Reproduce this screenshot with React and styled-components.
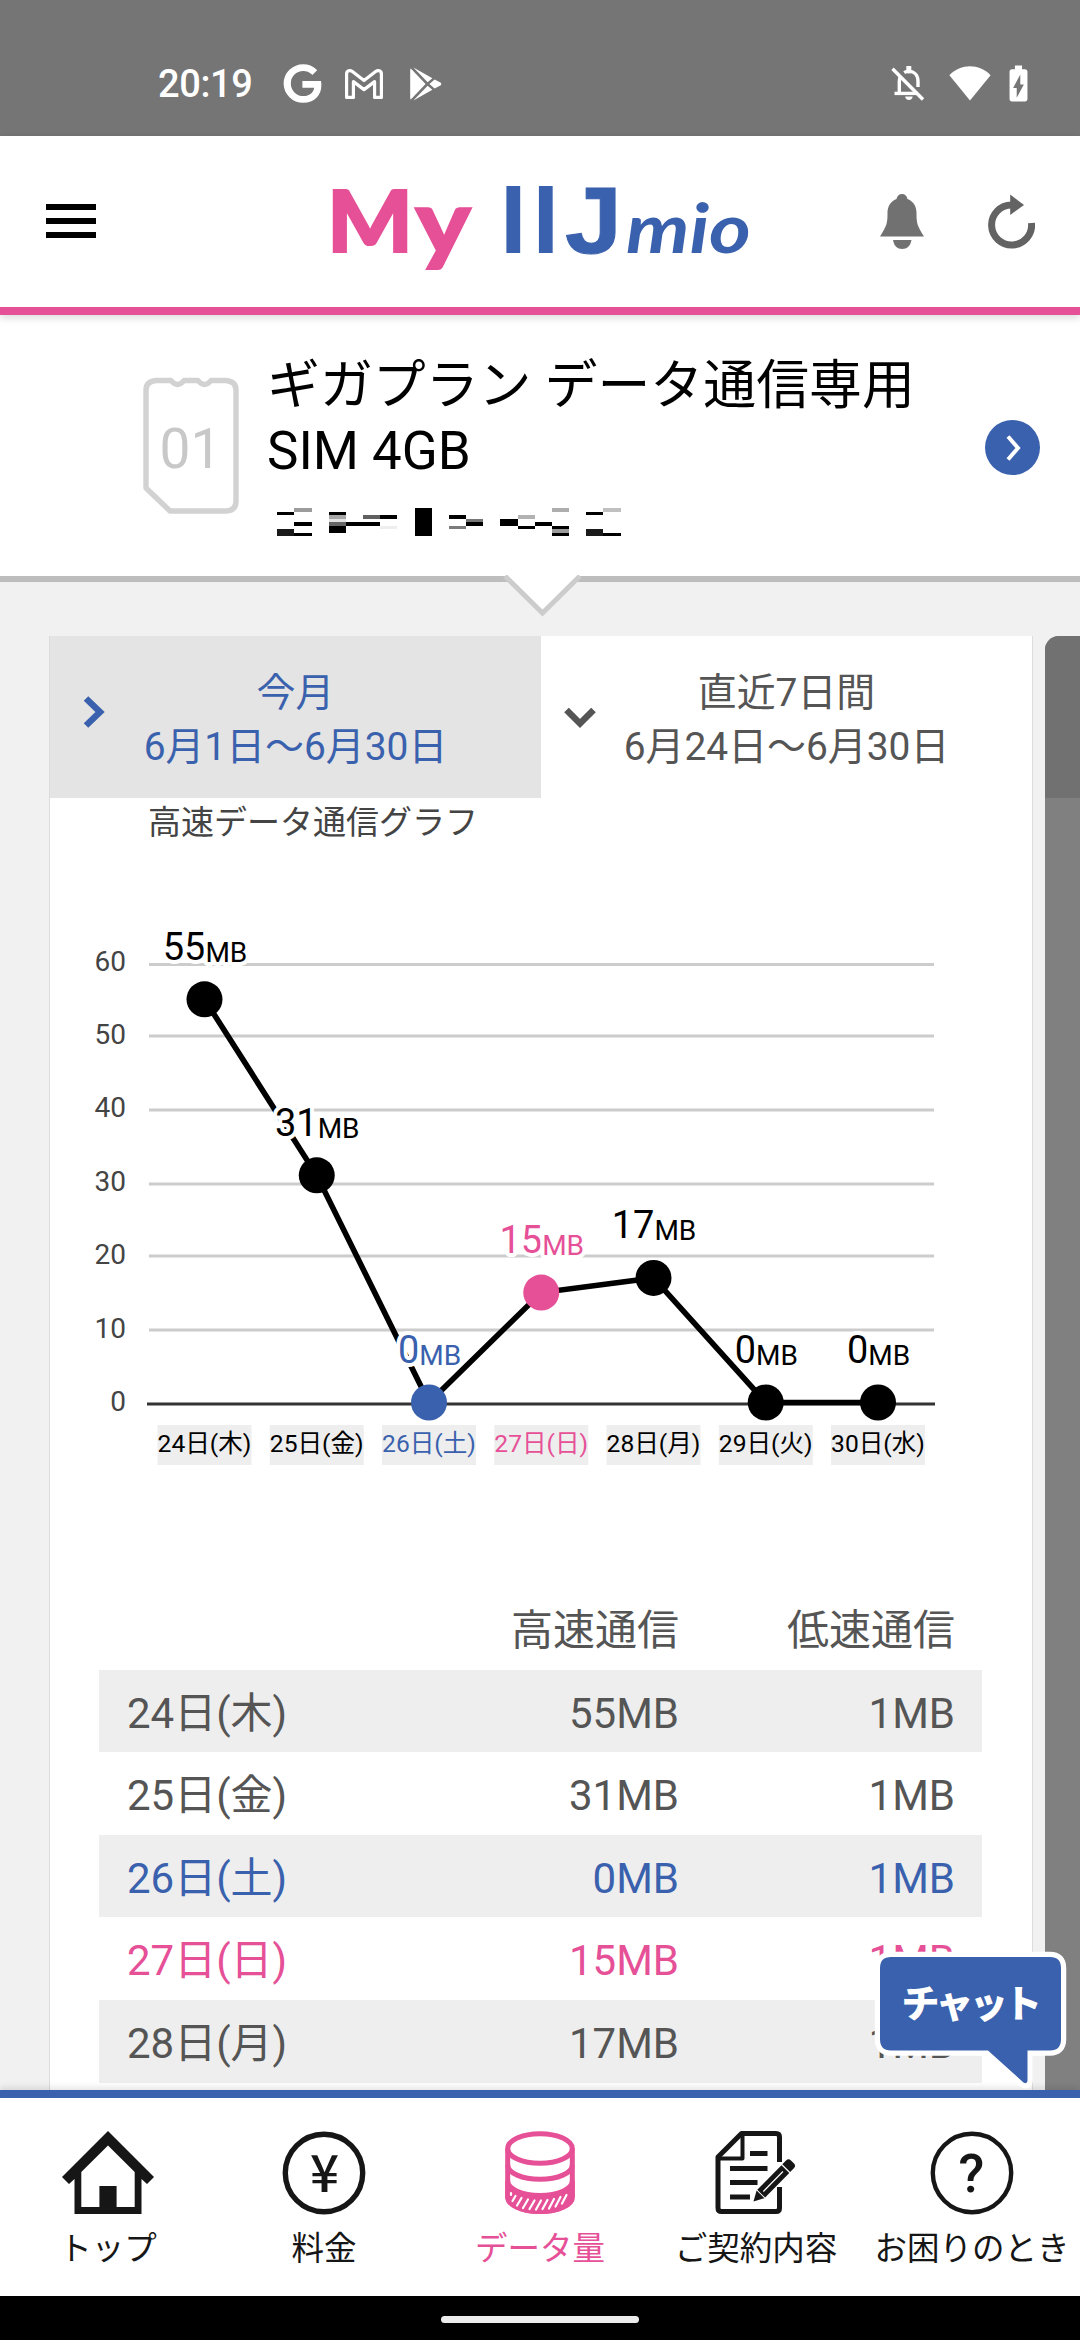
import React from "react";
import styled, { createGlobalStyle } from "styled-components";
import { SiGoogle } from "react-icons/si";
import { MdBatteryChargingFull } from "react-icons/md";

const PINK = "#e65097";
const BLUE = "#3a61ad";
const INK = "#161616";

const Global = createGlobalStyle`
  * { box-sizing: border-box; }
  body {
    margin: 0;
    background: #fff;
    font-family: Roboto, "Noto Sans CJK JP", sans-serif;
  }
  svg { display: block; flex: none; }
`;

const Screen = styled.div`
  width: 1080px;
  height: 2340px;
  display: flex;
  flex-direction: column;
  overflow: hidden;
  position: relative;
`;

const StatusBar = styled.div`
  height: 136px;
  flex: none;
  background: #757575;
  color: #fff;
  display: flex;
  align-items: flex-start;
  justify-content: space-between;
  padding: 62px 41px 0 158px;
`;

const StatusGroup = styled.div`
  display: flex;
  align-items: center;
  height: 43px;
`;

const StatusIcon = styled.span`
  margin-right: ${(p) => p.$after || 0}px;
`;

const Clock = styled.span`
  font-size: 38px;
  font-weight: 500;
  letter-spacing: -0.4px;
  line-height: 43px;
  width: 126px;
  padding-top: 2px;
`;

const Header = styled.header`
  height: 179px;
  flex: none;
  background: #fff;
  border-bottom: 8px solid ${PINK};
  box-shadow: 0 3px 8px rgba(0, 0, 0, 0.14);
  position: relative;
  z-index: 2;
  display: flex;
  align-items: flex-start;
  padding: 30px 45px 0 46px;
`;

const MenuButton = styled.div`
  margin-top: 38px;
  width: 50px;
  display: flex;
  flex-direction: column;
  gap: 8px;
`;

const MenuBar = styled.span`
  height: 6px;
  background: #000;
`;

const Logo = styled.svg`
  margin-left: 224px;
  overflow: visible;
`;

const HeaderIcons = styled.div`
  margin: 28px 0 0 auto;
  display: flex;
  gap: 64px;
`;

const SimBar = styled.section`
  height: 267px;
  flex: none;
  background: #fff;
  border-bottom: 6px solid #bdbdbd;
  display: flex;
  align-items: flex-start;
  padding: 0 40px 0 143px;
  position: relative;
  z-index: 1;
`;

const SimCard = styled.svg`
  margin-top: 62px;
`;

const SimInfo = styled.div`
  margin: 39px 0 0 28px;
  width: 690px;
`;

const SimName = styled.div`
  font-size: 52.9px;
  line-height: 65px;
  color: #000;
  margin-bottom: 22px;
`;

const NextButton = styled.div`
  margin: 105px 0 0 auto;
  width: 55px;
  height: 55px;
  border-radius: 50%;
  background: ${BLUE};
  display: grid;
  place-items: center;
`;

const Notch = styled.svg`
  position: absolute;
  left: 502px;
  top: 260px;
`;

const Content = styled.main`
  flex: 1;
  min-height: 0;
  background: #f1f1f1;
  display: flex;
  gap: 12px;
  padding: 54px 0 0 49px;
  overflow: hidden;
`;

const Card = styled.article`
  width: 984px;
  flex: none;
  background: #fff;
  border: solid #dcdcdc;
  border-width: 0 1px;
`;

const NextCard = styled.aside`
  width: 60px;
  flex: none;
  background: #808080;
  border-top-left-radius: 14px;
  overflow: hidden;
`;

const NextCardTab = styled.div`
  height: 162px;
  background: #717171;
`;

const Tabs = styled.div`
  display: grid;
  grid-template-columns: 1fr 1fr;
  height: 162px;
`;

const Tab = styled.div`
  background: ${(p) => (p.$active ? "#fff" : "#e4e4e4")};
  color: ${(p) => (p.$active ? "#555" : BLUE)};
  display: grid;
  grid-template-columns: 34px 1fr 34px;
  padding: 30px 0 0;
  font-size: 38.9px;
  line-height: 54px;
  text-align: center;
  white-space: nowrap;
`;

const TabText = styled.div`
  justify-self: center;
`;

const TabArrow = styled.svg`
  justify-self: end;
  margin-top: ${(p) => p.$top}px;
  margin-right: -21px;
`;

const ChartTitle = styled.div`
  font-size: 33px;
  line-height: 50px;
  color: #444;
  padding-left: 98px;
`;

const Chart = styled.svg`
  margin-top: 62px;
`;

const Table = styled.div`
  margin: 117px 50px 0 49px;
  font-size: 42px;
  line-height: 87px;
  color: #555;
`;

const Row = styled.div`
  display: grid;
  grid-template-columns: 1fr 260px 276px;
  align-items: baseline;
  height: 82.6px;
  padding: 0 27px 0 28px;
  text-align: right;
  color: ${(p) => p.$color || "#555"};
  background: ${(p) => (p.$shaded ? "#eee" : "transparent")};
`;

const DateCell = styled.span`
  text-align: left;
`;

const Nav = styled.nav`
  height: 206px;
  flex: none;
  background: #fff;
  border-top: 8px solid ${BLUE};
  box-shadow: 0 -3px 6px rgba(0, 0, 0, 0.1);
  position: relative;
  display: grid;
  grid-template-columns: repeat(5, 1fr);
`;

const NavItem = styled.div`
  display: flex;
  flex-direction: column;
  align-items: center;
  padding-top: 33px;
  color: ${(p) => (p.$active ? PINK : INK)};
  font-size: 32.5px;
  line-height: 46px;
  white-space: nowrap;
`;

const NavLabel = styled.span`
  margin-top: 11px;
`;

const GestureBar = styled.div`
  height: 44px;
  flex: none;
  background: #000;
  display: flex;
  justify-content: center;
  padding-top: 20px;
`;

const Handle = styled.div`
  width: 198px;
  height: 7px;
  border-radius: 4px;
  background: #ececec;
`;

const ChatButton = styled.svg`
  position: absolute;
  left: 872px;
  top: 1948px;
`;

const DAYS = [
  { label: "24日(木)", fast: 55 },
  { label: "25日(金)", fast: 31 },
  { label: "26日(土)", fast: 0, color: BLUE },
  { label: "27日(日)", fast: 15, color: PINK },
  { label: "28日(月)", fast: 17 },
  { label: "29日(火)", fast: 0 },
  { label: "30日(水)", fast: 0 },
];

const MASK = [
  [438, 458, 51, 10, "#000"], [489, 447, 54, 11, "#9c9c9c"], [489, 489, 54, 11, "#000"],
  [438, 510, 51, 20, "#1a1a1a"], [489, 521, 54, 9, "#000"],
  [594, 458, 51, 10, "#000"], [594, 468, 51, 11, "#a8a8a8"], [594, 479, 51, 10, "#e2e2e2"],
  [594, 489, 51, 11, "#666"], [594, 500, 51, 21, "#000"], [645, 489, 102, 11, "#000"],
  [696, 468, 51, 11, "#606060"], [747, 468, 51, 11, "#000"], [747, 500, 51, 10, "#eee"],
  [852, 447, 51, 83, "#000"],
  [954, 468, 51, 11, "#000"], [1005, 479, 51, 10, "#777"], [1005, 489, 51, 11, "#000"], [954, 500, 51, 10, "#7c7c7c"],
  [1107, 479, 54, 21, "#000"], [1161, 468, 51, 11, "#b2b2b2"], [1161, 500, 51, 10, "#000"], [1212, 489, 51, 11, "#000"],
  [1263, 447, 51, 11, "#adadad"], [1263, 500, 51, 10, "#000"], [1263, 510, 51, 11, "#9c9c9c"], [1263, 521, 51, 9, "#000"],
  [1365, 458, 51, 10, "#000"], [1416, 447, 54, 11, "#c0c0c0"], [1365, 510, 51, 20, "#1a1a1a"], [1416, 521, 54, 9, "#000"],
];

const GRID_Y = [1404, 1330, 1256, 1184, 1110, 1036, 964.5];

function UsageChart() {
  const x = (i) => 204.5 + i * 112.25;
  const y = (v) => 1402.5 - v * 7.33;
  return (
    <Chart width="982" height="560" viewBox="50 910 982 560">
      {GRID_Y.map((gy, i) => (
        <line key={gy} x1={i ? 149 : 147} x2={i ? 934 : 935} y1={gy} y2={gy} stroke={i ? "#ccc" : "#333"} strokeWidth="3" />
      ))}
      {GRID_Y.map((gy, i) => (
        <text key={gy} x="126" y={1411 - i * 73.4} fontSize="28" fill="#444" textAnchor="end">{i * 10}</text>
      ))}
      <polyline points={DAYS.map((d, i) => `${x(i)},${y(d.fast)}`).join(" ")} fill="none" stroke="#000" strokeWidth="5.6" />
      {DAYS.map((d, i) => (
        <circle key={d.label} cx={x(i)} cy={y(d.fast)} r="18" fill={d.color || "#000"} />
      ))}
      {DAYS.map((d, i) => (
        <text key={d.label} x={x(i) + 0.5} y={y(d.fast) - 39.5} textAnchor="middle" fontSize="38" fill={d.color || "#000"} stroke="#fff" strokeWidth="8" strokeLinejoin="round" paintOrder="stroke">
          {d.fast}
          <tspan fontSize="28" dy="2">MB</tspan>
        </text>
      ))}
      {DAYS.map((d, i) => (
        <g key={d.label}>
          <rect x={x(i) - 47} y="1425" width="94" height="40" fill="#eee" />
          <text x={x(i)} y="1451.5" textAnchor="middle" fontSize="24.6" fill={d.color || "#000"}>{d.label}</text>
        </g>
      ))}
    </Chart>
  );
}

const GmailIcon = () => (
  <svg width="38" height="30" viewBox="0 0 38 30" fill="none" stroke="#fff" strokeWidth="3.2" strokeLinejoin="round">
    <path d="M1.6 28.4V5C1.6 1.8 5 .6 7.4 2.5L19 11.5 30.6 2.5C33 .6 36.4 1.8 36.4 5V28.4H29.6V12.6L19 20.6 8.4 12.6V28.4Z" />
  </svg>
);

const PlayIcon = () => (
  <svg width="32" height="34" viewBox="0 0 32 34" fill="#fff">
    <path d="M.8 1.6 15.6 17 .8 32.4C.3 32 .2 31.5.2 31V3C.2 2.4.4 2 .8 1.6Z" />
    <path d="M3.4.6 22.4 11.2 17.6 15.2Z M3.4 33.4 22.4 22.8 17.6 18.8Z" />
    <path d="M24.6 12.4 30.4 15.6C31.6 16.4 31.6 17.6 30.4 18.4L24.6 21.6 19.4 17Z" />
  </svg>
);

const BellOffIcon = () => (
  <svg width="34" height="36" viewBox="0 0 34 36" fill="none" stroke="#fff" strokeWidth="3.4">
    <path d="M1.5 2.800 32 33.500" />
    <path d="M3.500 27.400H27" />
    <path d="M8.300 27V15.500C8.300 13.200 8.800 11.300 9.700 9.800" />
    <path d="M13.200 6.600C14.500 5.800 16 5.400 17.800 5.400 23.500 5.400 27 9.600 27 15.500V21" />
    <path d="M17.800 1V5" strokeWidth="5" strokeLinecap="round" />
    <path d="M14.200 30.500H21.600C21.600 32.700 20 34 17.900 34S14.200 32.700 14.200 30.500Z" fill="#fff" stroke="none" />
  </svg>
);

const WifiIcon = () => (
  <svg width="42" height="35" viewBox="0 0 42 35" fill="#fff">
    <path d="M.4 9.2C12 -2.6 30 -2.6 41.6 9.2L21 34.6Z" />
  </svg>
);

const HomeIcon = () => (
  <svg width="92" height="84" viewBox="0 0 92 84">
    <path fill={INK} fillRule="evenodd" d="M46 0 92 46 85 53 79.5 48V83H12.5V48L7 53 0 46ZM46 14.6 72.7 41V76H54.6V55H37.4V76H19.3V41Z" />
  </svg>
);

const YenIcon = () => (
  <svg width="84" height="84" viewBox="0 0 84 84">
    <circle cx="42" cy="42" r="38.7" fill="none" stroke={INK} strokeWidth="5.4" />
    <text x="42.5" y="61" textAnchor="middle" fontFamily='"Noto Sans CJK JP", sans-serif' fontWeight="500" fontSize="51" fill={INK}>¥</text>
  </svg>
);

const DataIcon = () => (
  <svg width="70" height="84" viewBox="0 0 70 84" fill="none" stroke={PINK} strokeWidth="5">
    <ellipse cx="35" cy="17.5" rx="32.3" ry="14.8" />
    <path d="M2.7 17.5V66C2.7 74 17 80.6 35 80.6S67.3 74 67.3 66V17.5" />
    <path d="M2.7 34C2.7 42 17 48.2 35 48.2S67.3 42 67.3 34" />
    <path d="M2.7 50C2.7 58 17 64.4 35 64.4S67.3 58 67.3 50V66C67.3 74 53 80.6 35 80.6S2.7 74 2.7 66Z" fill={PINK} />
    <path stroke="#fff" strokeWidth="2.2" strokeLinecap="round" d="M6 62V64M10.500 65 7.500 70M16.500 67 12 74.500M23 68.500 18 77M29.500 69.500 24.500 78M36 69.500 31 78.500M42.500 69 37.500 78M49 68 44 77.500M55.500 66 50.500 75.500M61.500 64 57 72.500" />
  </svg>
);

const ContractIcon = () => (
  <svg width="84" height="84" viewBox="0 0 84 84">
    <g fill="none" stroke={INK} strokeWidth="5" strokeLinejoin="round">
      <path d="M65.500 31V6Q65.500 2.500 62 2.500H27.500L4 26V77Q4 80.500 7.500 80.500H62Q65.500 80.500 65.500 77V56" />
      <path d="M28.500 3V27.500H5" strokeWidth="4" />
    </g>
    <path fill="none" stroke={INK} strokeWidth="5" d="M36 22.500H53.500M16 37.500H53.500M16 51.500H43.500M16 66H36" />
    <g transform="translate(39.500 70.500) rotate(-45.500)" fill={INK}>
      <path d="M0 0 10-5.500V5.500Z" />
      <rect x="11" y="-5.500" width="34.500" height="11" />
      <path d="M46.700-5.500H52Q55.500-5.500 55.500-2V2Q55.500 5.500 52 5.500H46.700Z" />
      <path d="M14 0H42" stroke="#fff" strokeWidth="1.200" />
    </g>
  </svg>
);

const HelpIcon = () => (
  <svg width="84" height="84" viewBox="0 0 84 84">
    <circle cx="42" cy="42" r="39.2" fill="none" stroke={INK} strokeWidth="4.4" />
    <text x="41.5" y="61" textAnchor="middle" fontSize="53" fontWeight="500" fill={INK}>?</text>
  </svg>
);

const NAV = [
  { label: "トップ", Icon: HomeIcon },
  { label: "料金", Icon: YenIcon },
  { label: "データ量", Icon: DataIcon, active: true },
  { label: "ご契約内容", Icon: ContractIcon },
  { label: "お困りのとき", Icon: HelpIcon },
];

export default function App() {
  return (
    <Screen>
      <Global />
      <StatusBar>
        <StatusGroup>
          <Clock>20:19</Clock>
          <StatusIcon $after={24}>
            <SiGoogle size={37} stroke="#fff" strokeWidth="1.1" overflow="visible" />
          </StatusIcon>
          <StatusIcon $after={27}>
            <GmailIcon />
          </StatusIcon>
          <StatusIcon>
            <PlayIcon />
          </StatusIcon>
        </StatusGroup>
        <StatusGroup>
          <StatusIcon $after={24}>
            <BellOffIcon />
          </StatusIcon>
          <StatusIcon $after={6}>
            <WifiIcon />
          </StatusIcon>
          <StatusIcon $after={-1}>
            <MdBatteryChargingFull size={43} />
          </StatusIcon>
        </StatusGroup>
      </StatusBar>

      <Header>
        <MenuButton>
          <MenuBar />
          <MenuBar />
          <MenuBar />
        </MenuButton>
        <Logo width="440" height="130" viewBox="320 166 440 130" fontFamily="Lato, sans-serif">
          <text x="327" y="252" fontSize="85" fontWeight="900" fill={PINK} stroke={PINK} strokeWidth="2" textLength="86" lengthAdjust="spacingAndGlyphs">M</text>
          <text x="415" y="254" fontSize="90" fontWeight="900" fill={PINK} stroke={PINK} strokeWidth="1.500" textLength="56" lengthAdjust="spacingAndGlyphs">y</text>
          <text x="499.500 532" y="252.500" fontSize="91" fontWeight="900" fill={BLUE}>II</text>
          <text x="565" y="252.500" fontFamily='"Liberation Sans", sans-serif' fontSize="94" fontWeight="700" fill={BLUE} stroke={BLUE} strokeWidth="1" textLength="57" lengthAdjust="spacingAndGlyphs">J</text>
          <text x="626" y="252.500" fontSize="68" fontWeight="700" fontStyle="italic" fill={BLUE} textLength="125" lengthAdjust="spacingAndGlyphs">mio</text>
        </Logo>
        <HeaderIcons>
          <svg width="44" height="56" viewBox="0 0 44 56" fill="#717171">
            <path d="M22 0C25 0 27 2 27.500 5 34 7.500 36.500 13 36.500 19 36.500 29 37 31.500 44 42.500H0C7 31.500 7.500 29 7.500 19 7.500 13 10 7.500 16.500 5 17 2 19 0 22 0ZM13 46H31.500C30.500 52 27 55 22.200 55S14 52 13 46Z" />
          </svg>
          <svg width="47" height="56" viewBox="0 0 47 56">
            <path d="M43.500 29A20 20 0 1 1 23.500 11" fill="none" stroke="#636363" strokeWidth="7" />
            <path d="M22.200.5 36 11 22.200 21Z" fill="#636363" />
          </svg>
        </HeaderIcons>
      </Header>

      <SimBar>
        <SimCard width="96" height="138" viewBox="0 0 96 138">
          <path fill="none" stroke="#d2d2d2" strokeWidth="5.400" strokeLinejoin="round" d="M13 3.500H28Q31 7.500 34.500 7.500T41 3.500H55Q58 7.500 61.500 7.500T68 3.500H83Q93 4.500 93 13V124Q93 134 83 134H27L3 111V13Q3 4.500 13 3.500Z" />
          <text x="47.500" y="91" textAnchor="middle" fontSize="55" fill="#c8c8c8">01</text>
        </SimCard>
        <SimInfo>
          <SimName>ギガプラン データ通信専用SIM 4GB</SimName>
          <svg width="357" height="32" viewBox="408 440 1071 96" shapeRendering="crispEdges">
            {MASK.map(([x, y, w, h, c]) => (
              <rect key={`${x}-${y}`} x={x} y={y} width={w} height={h} fill={c} />
            ))}
          </svg>
        </SimInfo>
        <NextButton>
          <svg width="16" height="26" viewBox="0 0 16 26" fill="none" stroke="#fff" strokeWidth="4">
            <path d="M3 1.500 13 13 3 24.500" />
          </svg>
        </NextButton>
        <Notch width="82" height="44" viewBox="0 0 82 44">
          <path d="M4 0 41 37.500 78 0Z" fill="#fff" />
          <path d="M3 1 40.500 38 78 1" fill="none" stroke="#ccc" strokeWidth="5" />
        </Notch>
      </SimBar>

      <Content>
        <Card>
          <Tabs>
            <Tab>
              <TabArrow $top={30} width="22" height="32" viewBox="0 0 22 32" fill="none" stroke={BLUE} strokeWidth="6.500">
                <path d="M3 2.500 17 16 3 29.500" />
              </TabArrow>
              <TabText>今月<br />6月1日〜6月30日</TabText>
            </Tab>
            <Tab $active>
              <TabArrow $top={41} width="32" height="22" viewBox="0 0 32 22" fill="none" stroke="#555" strokeWidth="6.500">
                <path d="M2.500 3 16 16.500 29.500 3" />
              </TabArrow>
              <TabText>直近7日間<br />6月24日〜6月30日</TabText>
            </Tab>
          </Tabs>
          <ChartTitle>高速データ通信グラフ</ChartTitle>
          <UsageChart />
          <Table>
            <Row>
              <DateCell />
              <span>高速通信</span>
              <span>低速通信</span>
            </Row>
            {DAYS.slice(0, 5).map((d, i) => (
              <Row key={d.label} $shaded={i % 2 === 0} $color={d.color}>
                <DateCell>{d.label}</DateCell>
                <span>{d.fast}MB</span>
                <span>1MB</span>
              </Row>
            ))}
          </Table>
        </Card>
        <NextCard>
          <NextCardTab />
        </NextCard>
      </Content>

      <Nav>
        {NAV.map(({ label, Icon, active }) => (
          <NavItem key={label} $active={active}>
            <Icon />
            <NavLabel>{label}</NavLabel>
          </NavItem>
        ))}
      </Nav>
      <GestureBar>
        <Handle />
      </GestureBar>

      <ChatButton width="200" height="142" viewBox="872 1948 200 142">
        <path
          d="M891 1957H1050Q1061 1957 1061 1968V2039Q1061 2050.500 1050 2050.500H1027.500V2081Q1026.500 2084.500 1023.500 2082.500L988 2050.500H891Q880 2050.500 880 2039V1968Q880 1957 891 1957Z"
          fill={BLUE} stroke="#fff" strokeWidth="10.500" strokeLinejoin="round" paintOrder="stroke"
        />
        <text x="901.500" y="2017" fontSize="38" fontWeight="900" letterSpacing="-3.700" fill="#fff" fontFamily='"Noto Sans CJK JP", sans-serif'>チャット</text>
      </ChatButton>
    </Screen>
  );
}
